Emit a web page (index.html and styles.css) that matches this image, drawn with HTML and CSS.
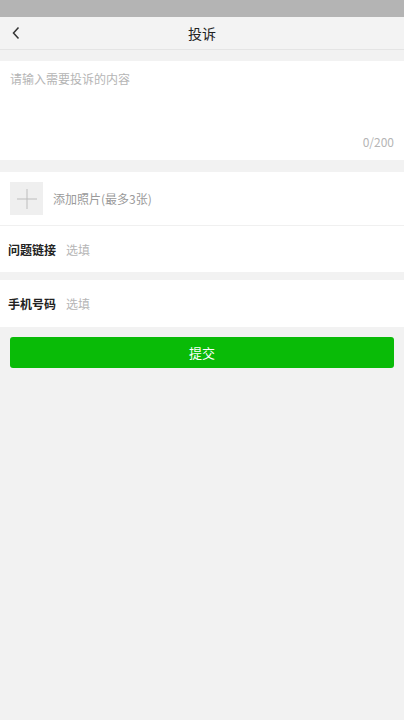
FILE: index.html
```html
<!DOCTYPE html>
<html lang="zh-CN">

<head>
    <meta charset="UTF-8">
    <meta name="viewport" content="width=device-width, initial-scale=1.0">
    <title>投诉</title>
    <link rel="stylesheet" href="styles.css">
</head>

<body>
    <div class="status"></div>
    <div class="nav">
        <a class="back" href="javascript:;">
            <svg width="10" height="14" viewBox="0 0 10 14">
                <path d="M7.5 1.5 L2.5 7 L7.5 12.5" fill="none" stroke="#333" stroke-width="1.5" />
            </svg>
        </a>
        <div class="title">投诉</div>
    </div>

    <div class="box content">
        <div class="placeholder">请输入需要投诉的内容</div>
        <div class="count">0/200</div>
    </div>

    <div class="box">
        <div class="photo">
            <div class="add">
                <svg width="20" height="20" viewBox="0 0 20 20">
                    <path d="M10 0 V20 M0 10 H20" stroke="#bdbdbd" stroke-width="1" />
                </svg>
            </div>
            <span class="tip">添加照片(最多3张)</span>
        </div>
        <div class="field">
            <span class="label">问题链接</span>
            <span class="tip">选填</span>
        </div>
    </div>

    <div class="box gap">
        <div class="field tall">
            <span class="label">手机号码</span>
            <span class="tip">选填</span>
        </div>
    </div>

    <div class="btn-wrap">
        <a class="btn" href="javascript:;">提交</a>
    </div>
</body>

</html>
```

FILE: styles.css
```css
html,
body {
    margin: 0;
    padding: 0;
    background-color: #f2f2f2;
    font-family: "Noto Sans CJK SC", "Noto Sans", sans-serif;
    font-size: 12px;
    color: #333;
}

.status {
    height: 17px;
    background-color: #b4b4b4;
}

.nav {
    height: 32px;
    background-color: #f3f3f3;
    border-bottom: 1px solid #e4e4e4;
    display: flex;
    align-items: center;
    justify-content: center;
    position: relative;
}

.back {
    position: absolute;
    left: 11px;
    top: 9px;
    display: flex;
}

.title {
    font-size: 14px;
    color: #222;
}

.box {
    background-color: #fff;
    margin-top: 11px;
}

.box + .box {
    margin-top: 12px;
}

.box.gap {
    margin-top: 8px;
}

.content {
    height: 99px;
    padding: 0 10px;
    display: flex;
    flex-direction: column;
    justify-content: space-between;
    box-sizing: border-box;
}

.placeholder {
    color: #b5b5b5;
    padding-top: 9px;
}

.count {
    color: #b5b5b5;
    text-align: right;
    padding-bottom: 10px;
}

.photo {
    height: 53px;
    padding: 0 10px;
    display: flex;
    align-items: center;
    border-bottom: 1px solid #f0f0f0;
}

.add {
    width: 33px;
    height: 33px;
    background-color: #efefef;
    display: flex;
    align-items: center;
    justify-content: center;
    margin-right: 10px;
}

.tip {
    color: #b5b5b5;
}

.photo .tip {
    color: #9a9a9a;
}

.field {
    height: 46px;
    padding: 0 8px;
    display: flex;
    align-items: center;
}

.field.tall {
    height: 47px;
}

.label {
    font-weight: bold;
    color: #222;
    margin-right: 10px;
}

.btn-wrap {
    padding: 10px;
}

.btn {
    display: block;
    height: 31px;
    line-height: 31px;
    background-color: #09bb07;
    border-radius: 3px;
    color: #fff;
    text-align: center;
    text-decoration: none;
    font-size: 13px;
}
```
